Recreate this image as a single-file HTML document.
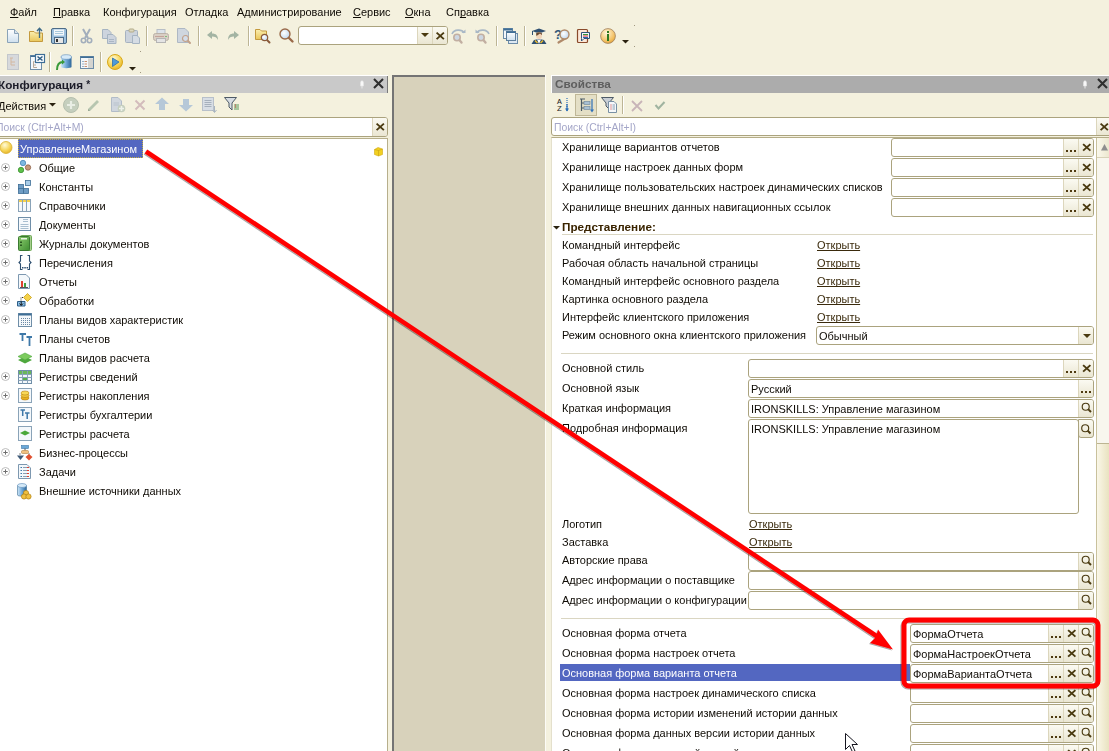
<!DOCTYPE html><html><head><meta charset="utf-8"><style>
*{margin:0;padding:0;box-sizing:border-box}
html,body{width:1109px;height:751px;overflow:hidden}
body{position:relative;background:#F4F1DE;font-family:"Liberation Sans",sans-serif;font-size:11px;color:#0E0A04}
.t{position:absolute;line-height:13px;white-space:pre;font-size:11.5px;transform:scaleX(.955);transform-origin:0 0}
.t.b{font-weight:bold;transform:scaleX(1.02)}
.u{text-decoration:underline;text-decoration-skip-ink:none}
u{text-decoration-skip-ink:none}
.fld{position:absolute;background:#fff;border:1px solid #ABA37E;border-radius:3px;overflow:hidden}
.btn{position:absolute;top:0;bottom:0;width:15px;border-left:1px solid #DCD6BC;background:linear-gradient(#FBFAF2,#EAE6D2)}
</style></head><body>
<div class="t " style="left:10px;top:6px;"><u>Ф</u>айл</div>
<div class="t " style="left:53px;top:6px;"><u>П</u>равка</div>
<div class="t " style="left:103px;top:6px;">Конфигурация</div>
<div class="t " style="left:185px;top:6px;">Отладка</div>
<div class="t " style="left:237px;top:6px;">Администрирование</div>
<div class="t " style="left:353px;top:6px;"><u>С</u>ервис</div>
<div class="t " style="left:405px;top:6px;"><u>О</u>кна</div>
<div class="t " style="left:446px;top:6px;">Сп<u>р</u>авка</div>
<div style="position:absolute;left:72px;top:26px;width:1px;height:20px;background:#BDB595"></div>
<div style="position:absolute;left:73px;top:26px;width:1px;height:20px;background:#FFFFFF"></div>
<div style="position:absolute;left:146px;top:26px;width:1px;height:20px;background:#BDB595"></div>
<div style="position:absolute;left:147px;top:26px;width:1px;height:20px;background:#FFFFFF"></div>
<div style="position:absolute;left:198px;top:26px;width:1px;height:20px;background:#BDB595"></div>
<div style="position:absolute;left:199px;top:26px;width:1px;height:20px;background:#FFFFFF"></div>
<div style="position:absolute;left:248px;top:26px;width:1px;height:20px;background:#BDB595"></div>
<div style="position:absolute;left:249px;top:26px;width:1px;height:20px;background:#FFFFFF"></div>
<div style="position:absolute;left:496px;top:26px;width:1px;height:20px;background:#BDB595"></div>
<div style="position:absolute;left:497px;top:26px;width:1px;height:20px;background:#FFFFFF"></div>
<div style="position:absolute;left:524px;top:26px;width:1px;height:20px;background:#BDB595"></div>
<div style="position:absolute;left:525px;top:26px;width:1px;height:20px;background:#FFFFFF"></div>
<div style="position:absolute;left:49px;top:52px;width:1px;height:20px;background:#BDB595"></div>
<div style="position:absolute;left:50px;top:52px;width:1px;height:20px;background:#FFFFFF"></div>
<div style="position:absolute;left:100px;top:52px;width:1px;height:20px;background:#BDB595"></div>
<div style="position:absolute;left:101px;top:52px;width:1px;height:20px;background:#FFFFFF"></div>
<div style="position:absolute;left:634px;top:25px;width:1px;height:1px;background:#A09880"></div>
<div style="position:absolute;left:634px;top:46px;width:1px;height:1px;background:#A09880"></div>
<div style="position:absolute;left:140px;top:51px;width:1px;height:1px;background:#A09880"></div>
<div style="position:absolute;left:140px;top:72px;width:1px;height:1px;background:#A09880"></div>
<div class="fld" style="left:298px;top:26px;width:150px;height:19px"><div class="btn" style="right:15px"></div><div class="btn" style="right:0"></div></div>
<div style="position:absolute;left:0px;top:75px;width:388px;height:1px;background:#FFFFFF"></div>
<div style="position:absolute;left:0px;top:76px;width:388px;height:17px;background:#C9C9C9"></div>
<div style="position:absolute;left:387px;top:76px;width:1px;height:17px;background:#7A7A7A"></div>
<div class="t b" style="left:-2px;top:78px;color:#1C1C28">Конфигурация <span style="font-size:10px;vertical-align:1px">*</span></div>
<div class="t " style="left:-2px;top:100px;">Действия</div>
<div class="fld" style="left:-3px;top:117px;width:391px;height:20px;border-radius:3px"><div class="btn" style="right:0;width:15px"></div></div>
<div class="t " style="left:-4px;top:121px;color:#A4A6C8;transform:scaleX(.905)">Поиск (Ctrl+Alt+M)</div>
<div style="position:absolute;left:0px;top:138px;width:388px;height:613px;background:#FFFFFF;border-top:1px solid #B7AF8C;border-right:1px solid #B7AF8C"></div>
<div style="position:absolute;left:0px;top:137px;width:388px;height:1px;background:#F2EFDA"></div>
<div style="position:absolute;left:18px;top:139px;width:125px;height:19px;background:#5367C1;outline:1px dotted #C8B040;outline-offset:-1px"></div>
<div class="t " style="left:20px;top:143px;color:#FFFFFF">УправлениеМагазином</div>
<div class="t " style="left:39px;top:162px;">Общие</div>
<div class="t " style="left:39px;top:181px;">Константы</div>
<div class="t " style="left:39px;top:200px;">Справочники</div>
<div class="t " style="left:39px;top:219px;">Документы</div>
<div class="t " style="left:39px;top:238px;">Журналы документов</div>
<div class="t " style="left:39px;top:257px;">Перечисления</div>
<div class="t " style="left:39px;top:276px;">Отчеты</div>
<div class="t " style="left:39px;top:295px;">Обработки</div>
<div class="t " style="left:39px;top:314px;">Планы видов характеристик</div>
<div class="t " style="left:39px;top:333px;">Планы счетов</div>
<div class="t " style="left:39px;top:352px;">Планы видов расчета</div>
<div class="t " style="left:39px;top:371px;">Регистры сведений</div>
<div class="t " style="left:39px;top:390px;">Регистры накопления</div>
<div class="t " style="left:39px;top:409px;">Регистры бухгалтерии</div>
<div class="t " style="left:39px;top:428px;">Регистры расчета</div>
<div class="t " style="left:39px;top:447px;">Бизнес-процессы</div>
<div class="t " style="left:39px;top:466px;">Задачи</div>
<div class="t " style="left:39px;top:485px;">Внешние источники данных</div>
<div style="position:absolute;left:392px;top:75px;width:154px;height:676px;background:#D8D2BB"></div>
<div style="position:absolute;left:392px;top:75px;width:2px;height:676px;background:#747474"></div>
<div style="position:absolute;left:392px;top:75px;width:153px;height:2px;background:#747474"></div>
<div style="position:absolute;left:545px;top:75px;width:1px;height:676px;background:#FCFBF6"></div>
<div style="position:absolute;left:551px;top:75px;width:558px;height:1px;background:#FFFFFF"></div>
<div style="position:absolute;left:551px;top:76px;width:1px;height:17px;background:#FFFFFF"></div>
<div style="position:absolute;left:552px;top:76px;width:557px;height:17px;background:#ACACAC"></div>
<div class="t b" style="left:555px;top:78px;color:#5E5E5E">Свойства</div>
<div style="position:absolute;left:575px;top:94px;width:22px;height:22px;background:#E4DFC6;border:1px solid #BFB797"></div>
<div style="position:absolute;left:622px;top:96px;width:1px;height:18px;background:#BDB595"></div>
<div style="position:absolute;left:623px;top:96px;width:1px;height:18px;background:#FFFFFF"></div>
<div class="fld" style="left:551px;top:117px;width:570px;height:19px"><div class="btn" style="right:8px;width:16px"></div></div>
<div class="t " style="left:554px;top:121px;color:#A4A6C8;transform:scaleX(.905)">Поиск (Ctrl+Alt+I)</div>
<div style="position:absolute;left:551px;top:137px;width:558px;height:614px;background:#FFFFFF;border-top:1px solid #B5AD88;border-left:1px solid #E4E0CC"></div>
<div style="position:absolute;left:560px;top:664px;width:350px;height:17px;background:#5367C1"></div>
<div class="t " style="left:562px;top:141px;color:#0E0A04">Хранилище вариантов отчетов</div>
<div class="t " style="left:562px;top:161px;color:#0E0A04">Хранилище настроек данных форм</div>
<div class="t " style="left:562px;top:181px;color:#0E0A04">Хранилище пользовательских настроек динамических списков</div>
<div class="t " style="left:562px;top:201px;color:#0E0A04">Хранилище внешних данных навигационных ссылок</div>
<div class="t " style="left:562px;top:239px;color:#0E0A04">Командный интерфейс</div>
<div class="t " style="left:562px;top:257px;color:#0E0A04">Рабочая область начальной страницы</div>
<div class="t " style="left:562px;top:275px;color:#0E0A04">Командный интерфейс основного раздела</div>
<div class="t " style="left:562px;top:293px;color:#0E0A04">Картинка основного раздела</div>
<div class="t " style="left:562px;top:311px;color:#0E0A04">Интерфейс клиентского приложения</div>
<div class="t " style="left:562px;top:329px;color:#0E0A04">Режим основного окна клиентского приложения</div>
<div class="t " style="left:562px;top:362px;color:#0E0A04">Основной стиль</div>
<div class="t " style="left:562px;top:382px;color:#0E0A04">Основной язык</div>
<div class="t " style="left:562px;top:402px;color:#0E0A04">Краткая информация</div>
<div class="t " style="left:562px;top:422px;color:#0E0A04">Подробная информация</div>
<div class="t " style="left:562px;top:518px;color:#0E0A04">Логотип</div>
<div class="t " style="left:562px;top:536px;color:#0E0A04">Заставка</div>
<div class="t " style="left:562px;top:554px;color:#0E0A04">Авторские права</div>
<div class="t " style="left:562px;top:574px;color:#0E0A04">Адрес информации о поставщике</div>
<div class="t " style="left:562px;top:594px;color:#0E0A04">Адрес информации о конфигурации</div>
<div class="t " style="left:562px;top:627px;color:#0E0A04">Основная форма отчета</div>
<div class="t " style="left:562px;top:647px;color:#0E0A04">Основная форма настроек отчета</div>
<div class="t " style="left:562px;top:667px;color:#FFFFFF">Основная форма варианта отчета</div>
<div class="t " style="left:562px;top:687px;color:#0E0A04">Основная форма настроек динамического списка</div>
<div class="t " style="left:562px;top:707px;color:#0E0A04">Основная форма истории изменений истории данных</div>
<div class="t " style="left:562px;top:727px;color:#0E0A04">Основная форма данных версии истории данных</div>
<div class="t " style="left:562px;top:747px;color:#0E0A04">Основная форма различий версий истории данных</div>
<div class="t b" style="left:562px;top:221px;color:#3A2400">Представление:</div>
<div style="position:absolute;left:562px;top:234px;width:531px;height:1px;background:#DAD6C2"></div>
<div style="position:absolute;left:561px;top:353px;width:532px;height:1px;background:#DAD6C2"></div>
<div style="position:absolute;left:561px;top:618px;width:532px;height:1px;background:#DAD6C2"></div>
<div class="fld" style="left:891px;top:138px;width:203px;height:19px"><div class="btn" style="right:0px"></div><div class="btn" style="right:15px"></div></div>
<div class="fld" style="left:891px;top:158px;width:203px;height:19px"><div class="btn" style="right:0px"></div><div class="btn" style="right:15px"></div></div>
<div class="fld" style="left:891px;top:178px;width:203px;height:19px"><div class="btn" style="right:0px"></div><div class="btn" style="right:15px"></div></div>
<div class="fld" style="left:891px;top:198px;width:203px;height:19px"><div class="btn" style="right:0px"></div><div class="btn" style="right:15px"></div></div>
<div class="t u" style="left:817px;top:239px;color:#3A2A0C">Открыть</div>
<div class="t u" style="left:817px;top:257px;color:#3A2A0C">Открыть</div>
<div class="t u" style="left:817px;top:275px;color:#3A2A0C">Открыть</div>
<div class="t u" style="left:817px;top:293px;color:#3A2A0C">Открыть</div>
<div class="t u" style="left:817px;top:311px;color:#3A2A0C">Открыть</div>
<div class="fld" style="left:816px;top:326px;width:278px;height:19px"><div class="btn" style="right:0px"></div></div>
<div class="t " style="left:819px;top:330px;">Обычный</div>
<div class="fld" style="left:748px;top:359px;width:346px;height:19px"><div class="btn" style="right:0px"></div><div class="btn" style="right:15px"></div></div>
<div class="fld" style="left:748px;top:379px;width:346px;height:19px"><div class="btn" style="right:0px"></div></div>
<div class="t " style="left:751px;top:383px;">Русский</div>
<div class="fld" style="left:748px;top:399px;width:346px;height:19px"><div class="btn" style="right:0px"></div></div>
<div class="t " style="left:751px;top:403px;">IRONSKILLS: Управление магазином</div>
<div class="fld" style="left:748px;top:419px;width:331px;height:95px"></div>
<div class="fld" style="left:1078px;top:419px;width:16px;height:19px;border-radius:0 3px 3px 3px;background:linear-gradient(#FBFAF2,#EAE6D2)"></div>
<div class="t " style="left:751px;top:423px;">IRONSKILLS: Управление магазином</div>
<div class="t u" style="left:749px;top:518px;color:#3A2A0C">Открыть</div>
<div class="t u" style="left:749px;top:536px;color:#3A2A0C">Открыть</div>
<div class="fld" style="left:748px;top:552px;width:346px;height:19px"><div class="btn" style="right:0px"></div></div>
<div class="fld" style="left:748px;top:571px;width:346px;height:19px"><div class="btn" style="right:0px"></div></div>
<div class="fld" style="left:748px;top:591px;width:346px;height:19px"><div class="btn" style="right:0px"></div></div>
<div class="fld" style="left:910px;top:624px;width:184px;height:19px"><div class="btn" style="right:0px"></div><div class="btn" style="right:15px"></div><div class="btn" style="right:30px"></div></div>
<div class="t " style="left:913px;top:628px;">ФормаОтчета</div>
<div class="fld" style="left:910px;top:644px;width:184px;height:19px"><div class="btn" style="right:0px"></div><div class="btn" style="right:15px"></div><div class="btn" style="right:30px"></div></div>
<div class="t " style="left:913px;top:648px;">ФормаНастроекОтчета</div>
<div class="fld" style="left:910px;top:664px;width:184px;height:19px"><div class="btn" style="right:0px"></div><div class="btn" style="right:15px"></div><div class="btn" style="right:30px"></div></div>
<div class="t " style="left:913px;top:668px;">ФормаВариантаОтчета</div>
<div class="fld" style="left:910px;top:684px;width:184px;height:19px"><div class="btn" style="right:0px"></div><div class="btn" style="right:15px"></div><div class="btn" style="right:30px"></div></div>
<div class="fld" style="left:910px;top:704px;width:184px;height:19px"><div class="btn" style="right:0px"></div><div class="btn" style="right:15px"></div><div class="btn" style="right:30px"></div></div>
<div class="fld" style="left:910px;top:724px;width:184px;height:19px"><div class="btn" style="right:0px"></div><div class="btn" style="right:15px"></div><div class="btn" style="right:30px"></div></div>
<div class="fld" style="left:910px;top:744px;width:184px;height:19px"><div class="btn" style="right:0px"></div><div class="btn" style="right:15px"></div><div class="btn" style="right:30px"></div></div>
<div style="position:absolute;left:1096px;top:138px;width:13px;height:613px;background:#F8F6EE;border-left:1px solid #C9C19C"></div>
<div style="position:absolute;left:1097px;top:138px;width:12px;height:20px;background:linear-gradient(90deg,#FAF8EC,#ECE7CF);border-bottom:1px solid #D8D2B8"></div>
<div style="position:absolute;left:1097px;top:443px;width:12px;height:308px;background:linear-gradient(90deg,#FAF7E8,#E9E2C0);border-top:1px solid #BDB592"></div>
<svg style="position:absolute;left:0;top:0" width="1109" height="751" viewBox="0 0 1109 751"><defs><linearGradient id="gDoc" x1="0" y1="0" x2="0" y2="1"><stop offset="0" stop-color="#FFFFFF"/><stop offset="1" stop-color="#CFE0EE"/></linearGradient><linearGradient id="gFol" x1="0" y1="0" x2="0" y2="1"><stop offset="0" stop-color="#FBEFB0"/><stop offset="1" stop-color="#E9C65A"/></linearGradient><linearGradient id="gGrn" x1="0" y1="0" x2="1" y2="1"><stop offset="0" stop-color="#8CCB6E"/><stop offset="1" stop-color="#3F8F32"/></linearGradient><radialGradient id="gYel" cx="0.4" cy="0.3" r="0.8"><stop offset="0" stop-color="#FFFBD8"/><stop offset="0.6" stop-color="#F5D250"/><stop offset="1" stop-color="#E0A820"/></radialGradient><linearGradient id="gBlu" x1="0" y1="0" x2="1" y2="0"><stop offset="0" stop-color="#CFE6F7"/><stop offset="0.5" stop-color="#6FA8D6"/><stop offset="1" stop-color="#2D6699"/></linearGradient><radialGradient id="gGlass" cx="0.4" cy="0.4" r="0.7"><stop offset="0" stop-color="#FFFFFF"/><stop offset="1" stop-color="#B9D2EC"/></radialGradient><radialGradient id="gOrg" cx="0.4" cy="0.3" r="0.8"><stop offset="0" stop-color="#FFF6DA"/><stop offset="0.7" stop-color="#F2BE5E"/><stop offset="1" stop-color="#D89A30"/></radialGradient></defs><g transform="translate(5,28)"><path d="M2.5 1.5H9.5L13.5 5.5V14.5H2.5Z" fill="url(#gDoc)" stroke="#8AA3B8"/><path d="M9.5 1.5V5.5H13.5" fill="#D6E2EC" stroke="#8AA3B8"/></g><g transform="translate(28,27)"><path d="M1.5 4.5H6L7.5 6H14.5V14.5H1.5Z" fill="url(#gFol)" stroke="#C49A3E"/><path d="M11.5 11V1.5M9 4L11.5 1.2L14 4" fill="none" stroke="#3D6A86" stroke-width="1.3"/></g><g transform="translate(51,28)"><rect x="0.5" y="0.5" width="15" height="15" rx="1.5" fill="#9CC0DE" stroke="#4D6C88"/><rect x="3" y="1.5" width="10" height="6" fill="#F3F7FA"/><path d="M4 3.5H12M4 5.5H12" stroke="#A8C8DC"/><rect x="3.5" y="9.5" width="9" height="6" fill="#E6E6E6" stroke="#4D6C88"/><rect x="5" y="11" width="2" height="3" fill="#333"/></g><g transform="translate(79,28)"><path d="M4 1L9 10M11 1L6 10" stroke="#A2AEBC" stroke-width="2"/><circle cx="4.5" cy="12.5" r="2.2" fill="none" stroke="#A2AEBC" stroke-width="1.6"/><circle cx="10.5" cy="12.5" r="2.2" fill="none" stroke="#A2AEBC" stroke-width="1.6"/></g><g transform="translate(101,28)"><path d="M1.5 1.5H7L10 4.5V10.5H1.5Z" fill="#CDD4DE" stroke="#A6B4C2"/><path d="M6.5 6.5H12L15 9.5V15.5H6.5Z" fill="#CDD4DE" stroke="#A6B4C2"/><path d="M8 11.5H13M8 13.5H13" stroke="#AAB6C4"/></g><g transform="translate(124,28)"><rect x="1.5" y="2.5" width="12" height="12" rx="1" fill="#CCD3DC" stroke="#A6B2C0"/><rect x="5" y="1" width="5" height="3" rx="1" fill="#DCD8C0" stroke="#B3AB88"/><path d="M8.5 7.5H13L15.5 10V15.5H8.5Z" fill="#D5DCE4" stroke="#A6B4C2"/></g><g transform="translate(153,28)"><rect x="4" y="1.5" width="8" height="5" fill="#DCE3EA" stroke="#B7BEC6"/><rect x="0.5" y="5.5" width="15" height="7" rx="2" fill="#D9CFC4" stroke="#BBB2A8"/><rect x="3.5" y="10.5" width="9" height="4" fill="#E4E4E4" stroke="#B5B5B5"/><path d="M2 8.5H11" stroke="#C3A39A"/><rect x="12" y="8" width="2" height="1" fill="#7BC07B"/></g><g transform="translate(176,28)"><path d="M1.5 0.5H9L12.5 4V14.5H1.5Z" fill="#CFD6DF" stroke="#AEB8C4"/><path d="M11.3 12.3 L14 15" stroke="#C2A18A" stroke-width="2" stroke-linecap="round"/><circle cx="9.5" cy="10.5" r="3" fill="#D3DDEA" stroke="#C2A18A" stroke-width="1.2"/></g><g transform="translate(206,30)"><path d="M1 5L6 1V3.5C10 3.5 12 5.5 12 10C11 7.5 9 6.5 6 6.5V9Z" fill="#A3B4A3"/></g><g transform="translate(227,30)"><path d="M12 5L7 1V3.5C3 3.5 1 5.5 1 10C2 7.5 4 6.5 7 6.5V9Z" fill="#A3B4A3"/></g><g transform="translate(255,28)"><path d="M0.5 1.5H5L6.5 3H11.5V11.5H0.5Z" fill="url(#gFol)" stroke="#C49A3E"/><path d="M11.4 11.4 L14.5 14.5" stroke="#8A5A3A" stroke-width="2" stroke-linecap="round"/><circle cx="9.5" cy="9.5" r="3.2" fill="url(#gGlass)" stroke="#8A5A3A" stroke-width="1.2"/></g><g transform="translate(279,28)"><path d="M9.0 9.0 L13.5 13.5" stroke="#9A6A4A" stroke-width="2.4" stroke-linecap="round"/><circle cx="6" cy="6" r="5" fill="url(#gGlass)" stroke="#9A6A4A" stroke-width="1.4"/></g><g transform="translate(451,28)"><path d="M1 6C3 1 11 1 13 5" fill="none" stroke="#A9B8C6" stroke-width="1.6"/><path d="M10.5 5H14.5V1.5Z" fill="#A9B8C6"/><path d="M7.9 11.4 L10.5 14.5" stroke="#C2AFA2" stroke-width="2.4" stroke-linecap="round"/><circle cx="6" cy="9.5" r="3.2" fill="#CDD7E2" stroke="#C2AFA2" stroke-width="1.6"/></g><g transform="translate(474,28)"><path d="M15 6C13 1 5 1 3 5" fill="none" stroke="#A9B8C6" stroke-width="1.6"/><path d="M5.5 5H1.5V1.5Z" fill="#A9B8C6"/><path d="M8.9 11.4 L11.5 14.5" stroke="#C2AFA2" stroke-width="2.4" stroke-linecap="round"/><circle cx="7" cy="9.5" r="3.2" fill="#CDD7E2" stroke="#C2AFA2" stroke-width="1.6"/></g><g transform="translate(503,28)"><rect x="0.5" y="0.5" width="9" height="10" fill="#F3F7FB" stroke="#6C8CA8"/><rect x="0.5" y="0.5" width="9" height="2" fill="#3E6E96"/><rect x="5.5" y="5.5" width="9" height="10" fill="#DDE8F2" stroke="#6C8CA8"/><rect x="3.5" y="3.5" width="9" height="9" fill="url(#gDoc)" stroke="#5E7F9C"/><rect x="3.5" y="3.5" width="9" height="1.5" fill="#3E6E96"/></g><g transform="translate(531,28)"><path d="M1 3L8 0.5L15 3L8 5.5Z" fill="#2E4F70"/><path d="M1.5 3V7" stroke="#2E4F70"/><ellipse cx="8" cy="7.5" rx="3" ry="3.5" fill="#F2D4B8"/><path d="M5 5.5Q8 3 11 5.5V7L9 5.5L5.5 8Z" fill="#6B4A30"/><path d="M0.5 16L3 12L8 11L13 12L15.5 16Z" fill="#2E4F70"/><path d="M6 11.5L8 16L10 11.5" fill="#FFFFFF"/><path d="M4 12.5L6.5 15M12 12.5L9.5 15" stroke="#E8B830" stroke-width="1.5"/></g><g transform="translate(554,28)"><text x="0" y="11" font-family="Liberation Sans" font-weight="bold" font-size="13" fill="#2F5678">?</text><path d="M13.2 9.2 L4.5 14.5" stroke="#B08A6A" stroke-width="2.2" stroke-linecap="round"/><circle cx="10.5" cy="6.5" r="4.5" fill="url(#gGlass)" stroke="#B08A6A" stroke-width="1.4"/></g><g transform="translate(576,28)"><rect x="1.5" y="1.5" width="10" height="13" rx="1" fill="#FCE8D8" stroke="#8A4A2A" stroke-width="1.2"/><path d="M5.5 4.5H13.5V10.5H8L5.5 13V10.5Z" fill="#F3F6FA" stroke="#2F5678"/><path d="M7 6.5H12" stroke="#3A9A3A"/><path d="M7 8H12" stroke="#D03030"/><path d="M7 9.5H12" stroke="#3060B0"/></g><g transform="translate(600,28)"><circle cx="8" cy="8" r="7.4" fill="url(#gOrg)" stroke="#A08060" stroke-width="0.8"/><rect x="7" y="3" width="2" height="2" fill="#2E7A20"/><rect x="7" y="6" width="2" height="7" fill="#2E7A20"/></g><g transform="translate(622,40)"><path d="M0 0H7L3.5 3.5Z" fill="#2A2210"/></g><g transform="translate(421,33)"><path d="M0 0H8L4 4Z" fill="#4A3A10"/></g><g transform="translate(436,32)"><path d="M0.6 0.6L7.9 7.1M7.9 0.6L0.6 7.1" stroke="#4A3A10" stroke-width="1.9"/></g><g transform="translate(6,54)"><rect x="1.5" y="0.5" width="11" height="15" fill="#D7D9DC" stroke="#C3C7CC"/><path d="M4 4H7M5 4V11H9M5 8H9" stroke="#D4B8A0" fill="none"/></g><g transform="translate(29,54)"><rect x="1.5" y="1.5" width="11" height="14" fill="#F5F8FB" stroke="#6F8EA8"/><rect x="1.5" y="1.5" width="11" height="1.5" fill="#3E6E96"/><path d="M4.5 7.5H5.5M4.5 7.5V13.5H8M4.5 11H7" stroke="#B8A898" fill="none"/><rect x="6.5" y="0.5" width="9" height="8" fill="#FFFFFF" stroke="#3E6E96" stroke-width="1.2"/><path d="M8.5 2.5L13.5 6.5M13.5 2.5L8.5 6.5" stroke="#2E5E86" stroke-width="1.6"/></g><g transform="translate(56,54)"><path d="M5 3V13C5 14.5 15.5 14.5 15.5 13V3Z" fill="url(#gBlu)"/><ellipse cx="10.25" cy="3" rx="5.25" ry="2.3" fill="#D6EAF8" stroke="#5A8AB8" stroke-width="0.6"/><path d="M1 16C1 10 3 8 7 8" fill="none" stroke="#3A9A3A" stroke-width="2"/><path d="M6 5.5L9 8L6 10.5Z" fill="#3A9A3A"/></g><g transform="translate(80,56)"><rect x="0.5" y="0.5" width="13" height="12" fill="#F4F7FA" stroke="#6C8CA8"/><rect x="0.5" y="0.5" width="13" height="1.5" fill="#3E6E96"/><rect x="8" y="2.5" width="5" height="9.5" fill="#D4D4D0"/><path d="M2.5 5.5H3.5M2.5 8H3.5M2.5 10.5H3.5" stroke="#3E6E96"/><path d="M4.5 5.5H7M4.5 8H7M4.5 10.5H7" stroke="#C89070"/></g><g transform="translate(107,54)"><circle cx="8" cy="8" r="7.5" fill="url(#gYel)" stroke="#D9A81A" stroke-width="1"/><path d="M5.5 4V12.5L12 8Z" fill="#4D9AD8" stroke="#2F6FA8" stroke-width="0.8"/></g><g transform="translate(129,67)"><path d="M0 0H7L3.5 3.5Z" fill="#2A2210"/></g><g transform="translate(359,79.5)"><path d="M1.5 3.5C1.5 0.5 4.5 0.5 4.5 3.5V6.5H1.5Z" fill="#F8F8F8" stroke="#E4E4E4" stroke-width="0.6"/><path d="M3 6.5V9" stroke="#E8E8E8"/></g><g transform="translate(373,78)"><path d="M1 1L10 10M10 1L1 10" stroke="#2E2E2E" stroke-width="2.1"/></g><g transform="translate(49,103)"><path d="M0 0H7L3.5 3.5Z" fill="#2A2210"/></g><g transform="translate(63,97)"><circle cx="8" cy="8" r="7.5" fill="#C5CFBE" stroke="#B5BFAE"/><path d="M8 4V12M4 8H12" stroke="#E9EEE5" stroke-width="2.2"/></g><g transform="translate(86,97)"><path d="M2 12L11 3L13 5L4 14H2Z" fill="#B7C6B0"/><path d="M2 12L4 14H2Z" fill="#9AA894"/></g><g transform="translate(110,97)"><path d="M1.5 0.5H8L11.5 4V14.5H1.5Z" fill="#D0D6DE" stroke="#B2BCC8"/><path d="M3.5 6H9M3.5 8H9" stroke="#B8C2CC"/><circle cx="11.5" cy="11.5" r="3.8" fill="#C5CFBE"/><path d="M11.5 9V14M9 11.5H14" stroke="#EEF2EA" stroke-width="1.6"/></g><g transform="translate(134,99)"><path d="M1.5 1.5L10.5 10.5M10.5 1.5L1.5 10.5" stroke="#D3BCBC" stroke-width="2"/></g><g transform="translate(155,97)"><path d="M7 0.5L14 7H10V13H4V7H0Z" fill="#B6C8D8"/></g><g transform="translate(179,98)"><path d="M7 13.5L14 7H10V1H4V7H0Z" fill="#B6C8D8"/></g><g transform="translate(202,97)"><rect x="0.5" y="0.5" width="11" height="13" fill="#D8DEE5" stroke="#B8C0CA"/><path d="M2.5 3.5H9.5M2.5 5.5H9.5M2.5 7.5H9.5M2.5 9.5H9.5" stroke="#A6B0BC"/><path d="M12.5 9V15M10.5 13L12.5 15.5L14.5 13" stroke="#A8B4C0" fill="none"/></g><g transform="translate(224,96)"><path d="M0.5 1.5H12.5L8 7V14L5 11V7Z" fill="#D6DCE2" stroke="#4E5A66"/><path d="M10 9H15M10 11H15M10 13H15" stroke="#5A9A5A"/><path d="M11 9H12M11 11H12" stroke="#D04040"/></g><g transform="translate(376,123)"><path d="M0.6 0.6L7.9 7.1M7.9 0.6L0.6 7.1" stroke="#4A3A10" stroke-width="1.9"/></g><g transform="translate(1,139.5)"><circle cx="5" cy="8" r="6" fill="url(#gYel)" stroke="#D8B030" stroke-width="0.8"/></g><g transform="translate(18,160)"><circle cx="5" cy="3" r="2.7" fill="#7DB8E0" stroke="#4A88B8" stroke-width="0.8"/><circle cx="3" cy="10" r="2.7" fill="#5EC04A" stroke="#3A9030" stroke-width="0.8"/><circle cx="10" cy="7.5" r="2.7" fill="#C89878" stroke="#8A6048" stroke-width="0.8"/></g><g transform="translate(1,163)"><circle cx="4.5" cy="4.5" r="4" fill="#fff" stroke="#BDBDBD" stroke-width="1"/><path d="M2.3 4.5H6.7M4.5 2.3V6.7" stroke="#6E6E6E" stroke-width="1"/></g><g transform="translate(18,180)"><rect x="0.5" y="4.5" width="5" height="5" fill="#6E9CC4" stroke="#3E6E96" stroke-width="0.8"/><rect x="7.5" y="0.5" width="5" height="5" fill="#A8CCE8" stroke="#3E6E96" stroke-width="0.8"/><rect x="0.5" y="8.5" width="5" height="5" fill="#6E9CC4" stroke="#3E6E96" stroke-width="0.8"/><rect x="5.5" y="8.5" width="5" height="5" fill="#6E9CC4" stroke="#3E6E96" stroke-width="0.8"/></g><g transform="translate(1,182)"><circle cx="4.5" cy="4.5" r="4" fill="#fff" stroke="#BDBDBD" stroke-width="1"/><path d="M2.3 4.5H6.7M4.5 2.3V6.7" stroke="#6E6E6E" stroke-width="1"/></g><g transform="translate(18,199)"><rect x="0.5" y="0.5" width="12" height="12" fill="#F4F8FB" stroke="#8AA3B8"/><rect x="1" y="1" width="11" height="2" fill="#F5D24A"/><path d="M4.5 1V12.5M8.5 1V12.5" stroke="#8AA3B8"/></g><g transform="translate(1,201)"><circle cx="4.5" cy="4.5" r="4" fill="#fff" stroke="#BDBDBD" stroke-width="1"/><path d="M2.3 4.5H6.7M4.5 2.3V6.7" stroke="#6E6E6E" stroke-width="1"/></g><g transform="translate(18,217)"><rect x="0.5" y="0.5" width="12" height="13" fill="#F6F9FC" stroke="#6F8EA8"/><path d="M5 2.5H10M5 4.5H10M2.5 7.5H10.5M2.5 9.5H10.5M2.5 11.5H10.5" stroke="#A9BED0"/></g><g transform="translate(1,220)"><circle cx="4.5" cy="4.5" r="4" fill="#fff" stroke="#BDBDBD" stroke-width="1"/><path d="M2.3 4.5H6.7M4.5 2.3V6.7" stroke="#6E6E6E" stroke-width="1"/></g><g transform="translate(18,235)"><rect x="2.5" y="0.5" width="11" height="15" rx="1" fill="#A8D090" stroke="#6EA858"/><rect x="0.5" y="1.5" width="11" height="14" rx="1" fill="url(#gGrn)" stroke="#3A7A30"/><rect x="3" y="3" width="6" height="1.5" fill="#E8F4E0"/><rect x="2" y="6.5" width="2" height="1.5" fill="#2A5A20"/><rect x="2" y="9.5" width="2" height="1.5" fill="#2A5A20"/></g><g transform="translate(1,239)"><circle cx="4.5" cy="4.5" r="4" fill="#fff" stroke="#BDBDBD" stroke-width="1"/><path d="M2.3 4.5H6.7M4.5 2.3V6.7" stroke="#6E6E6E" stroke-width="1"/></g><g transform="translate(18,255)"><path d="M4.5 0.5H2.5V6L1 7.5L2.5 9V14.5H4.5M9.5 0.5H11.5V6L13 7.5L11.5 9V14.5H9.5" fill="none" stroke="#2E4F70" stroke-width="1.1"/><rect x="4" y="12" width="1.5" height="1.5" fill="#2E4F70"/><rect x="6.3" y="12" width="1.5" height="1.5" fill="#2E4F70"/><rect x="8.6" y="12" width="1.5" height="1.5" fill="#2E4F70"/></g><g transform="translate(1,258)"><circle cx="4.5" cy="4.5" r="4" fill="#fff" stroke="#BDBDBD" stroke-width="1"/><path d="M2.3 4.5H6.7M4.5 2.3V6.7" stroke="#6E6E6E" stroke-width="1"/></g><g transform="translate(18,274)"><path d="M0.5 0.5H8L11.5 4V14.5H0.5Z" fill="#F4F8FB" stroke="#7D98B0"/><rect x="3" y="7" width="2" height="6" fill="#E04030"/><rect x="6" y="9" width="2" height="4" fill="#40A040"/><path d="M2 13.5H10" stroke="#555"/></g><g transform="translate(1,277)"><circle cx="4.5" cy="4.5" r="4" fill="#fff" stroke="#BDBDBD" stroke-width="1"/><path d="M2.3 4.5H6.7M4.5 2.3V6.7" stroke="#6E6E6E" stroke-width="1"/></g><g transform="translate(17,293)"><path d="M10.5 0.5L14.5 4.5L10.5 8.5L6.5 4.5Z" fill="#F5D24A" stroke="#C8A020" stroke-width="0.8"/><path d="M6 4.5H4V9" stroke="#333" stroke-dasharray="1 1" fill="none"/><path d="M0.5 8.5H8V13H0.5Z" fill="#8CC0E8" stroke="#2E5E86"/><path d="M4.2 8.5V12M2.5 10.5L4.2 12.5L6 10.5" stroke="#111" fill="none"/></g><g transform="translate(1,296)"><circle cx="4.5" cy="4.5" r="4" fill="#fff" stroke="#BDBDBD" stroke-width="1"/><path d="M2.3 4.5H6.7M4.5 2.3V6.7" stroke="#6E6E6E" stroke-width="1"/></g><g transform="translate(18,313)"><rect x="0.5" y="0.5" width="13" height="13" fill="#F4F8FB" stroke="#6F8EA8"/><rect x="0.5" y="0.5" width="13" height="2" fill="#3E6E96"/><path d="M3.5 5V12M5.5 5V12M7.5 5V12M9.5 5V12M11.5 5V12" stroke="#6A88A4" stroke-dasharray="1 1"/></g><g transform="translate(1,315)"><circle cx="4.5" cy="4.5" r="4" fill="#fff" stroke="#BDBDBD" stroke-width="1"/><path d="M2.3 4.5H6.7M4.5 2.3V6.7" stroke="#6E6E6E" stroke-width="1"/></g><g transform="translate(19,333)"><path d="M0.5 1H7M3.5 1V8M7.5 4H13M10.5 4V13" stroke="#3E78A8" stroke-width="1.8" fill="none"/></g><g transform="translate(17,352)"><path d="M1 8L8 4.5L15 8L8 11.5Z" fill="#4FA83E"/><path d="M1 4.5L8 1L15 4.5L8 8Z" fill="#7CCB5E" stroke="#4FA83E" stroke-width="0.6"/></g><g transform="translate(18,370)"><rect x="0.5" y="0.5" width="13" height="13" fill="#F4F8FB" stroke="#6F8EA8"/><rect x="1" y="1" width="12" height="3" fill="#6AB85A"/><path d="M0.5 4.5H13.5M0.5 7.5H13.5M0.5 10.5H13.5M4.5 1V13.5M9.5 1V13.5" stroke="#8AA3B8"/><rect x="5" y="8" width="4" height="2" fill="#5AB04A"/></g><g transform="translate(1,372)"><circle cx="4.5" cy="4.5" r="4" fill="#fff" stroke="#BDBDBD" stroke-width="1"/><path d="M2.3 4.5H6.7M4.5 2.3V6.7" stroke="#6E6E6E" stroke-width="1"/></g><g transform="translate(18,388)"><rect x="0.5" y="0.5" width="13" height="14" fill="#F4F8FB" stroke="#8AA3B8"/><ellipse cx="7" cy="10" rx="4" ry="2" fill="#E8B020" stroke="#B88010" stroke-width="0.6"/><ellipse cx="7" cy="7.5" rx="4" ry="2" fill="#F0C840" stroke="#B88010" stroke-width="0.6"/><ellipse cx="7" cy="5" rx="4" ry="2" fill="#F8D858" stroke="#B88010" stroke-width="0.6"/></g><g transform="translate(1,391)"><circle cx="4.5" cy="4.5" r="4" fill="#fff" stroke="#BDBDBD" stroke-width="1"/><path d="M2.3 4.5H6.7M4.5 2.3V6.7" stroke="#6E6E6E" stroke-width="1"/></g><g transform="translate(18,407)"><rect x="0.5" y="0.5" width="13" height="14" fill="#F4F8FB" stroke="#8AA3B8"/><path d="M2.5 3H7M4.7 3V9M7 6H11.5M9.2 6V12" stroke="#3E78A8" stroke-width="1.5" fill="none"/></g><g transform="translate(18,426)"><rect x="0.5" y="0.5" width="13" height="14" fill="#F4F8FB" stroke="#8AA3B8"/><path d="M2 7L7 4.5L12 7L7 9.5Z" fill="#4AA83A"/></g><g transform="translate(17,445)"><rect x="4.5" y="0.5" width="7" height="3" fill="#6AA8D8" stroke="#3E78A8" stroke-width="0.6"/><path d="M8 3.5V5.5" stroke="#555"/><rect x="4.5" y="5.5" width="7" height="3" rx="1" fill="#F0C080" stroke="#B08040" stroke-width="0.6"/><path d="M3 8V10M12 8V10" stroke="#888"/><path d="M0 10.5H7L3.5 15Z" fill="#3E5A78"/><path d="M12 9L15.5 12L12 15.5L8.5 12Z" fill="#E05030"/></g><g transform="translate(1,448)"><circle cx="4.5" cy="4.5" r="4" fill="#fff" stroke="#BDBDBD" stroke-width="1"/><path d="M2.3 4.5H6.7M4.5 2.3V6.7" stroke="#6E6E6E" stroke-width="1"/></g><g transform="translate(18,464)"><path d="M0.5 0.5H9L12.5 4V14.5H0.5Z" fill="#F4F8FB" stroke="#7D98B0"/><path d="M2.5 3.5H4M2.5 6.5H4M2.5 9.5H4M2.5 12.5H4" stroke="#3E78A8"/><path d="M5 3.5H9M5 6.5H9M5 9.5H9M5 12.5H9" stroke="#8AA0B4"/><path d="M9 3.5H11M9 6.5H11M9 9.5H11M9 12.5H11" stroke="#E04030"/></g><g transform="translate(1,467)"><circle cx="4.5" cy="4.5" r="4" fill="#fff" stroke="#BDBDBD" stroke-width="1"/><path d="M2.3 4.5H6.7M4.5 2.3V6.7" stroke="#6E6E6E" stroke-width="1"/></g><g transform="translate(17,483)"><path d="M0.5 2.5V12C0.5 13.5 9.5 13.5 9.5 12V2.5Z" fill="url(#gBlu)" stroke="#3E6E96" stroke-width="0.6"/><ellipse cx="5" cy="2.5" rx="4.5" ry="2" fill="#D6EAF8" stroke="#5A8AB8" stroke-width="0.6"/><circle cx="9" cy="10" r="2.6" fill="#F0C040" stroke="#B08010" stroke-width="0.7"/><circle cx="7" cy="13.5" r="2.6" fill="#F0C040" stroke="#B08010" stroke-width="0.7"/><circle cx="11.5" cy="13.5" r="2.6" fill="#F0C040" stroke="#B08010" stroke-width="0.7"/></g><g transform="translate(374,147)"><path d="M0.5 2.5L4 0.5L8.5 2L8.5 7.5L4.5 9L0.5 7.5Z" fill="#F2D020" stroke="#D0A810" stroke-width="0.6"/><path d="M4.5 3.5V9M0.5 2.5L4.5 3.5L8.5 2" stroke="#C8A010" stroke-width="0.6" fill="none"/></g><g transform="translate(1082,79.5)"><path d="M1.5 3.5C1.5 0.5 4.5 0.5 4.5 3.5V6.5H1.5Z" fill="#F8F8F8" stroke="#E4E4E4" stroke-width="0.6"/><path d="M3 6.5V9" stroke="#E8E8E8"/></g><g transform="translate(1097,78)"><path d="M1 1L10 10M10 1L1 10" stroke="#2E2E2E" stroke-width="2.1"/></g><g transform="translate(557,97)"><text x="0" y="6.5" font-family="Liberation Mono" font-size="8" fill="#222">A</text><text x="0" y="14" font-family="Liberation Mono" font-size="8" fill="#222">Z</text><path d="M10 1V13.5" stroke="#2E70B8" stroke-width="1.2" stroke-dasharray="1 1"/><path d="M10 7V14" stroke="#2E70B8" stroke-width="1.2"/><path d="M8 11.5L10 14.5L12 11.5Z" fill="#2E70B8"/></g><g transform="translate(579,98)"><path d="M1 1H6M2.5 1V13M2.5 5H6M2.5 10H6" stroke="#4A5A66" stroke-width="1.2" fill="none"/><rect x="5" y="3.5" width="6" height="3" fill="#A8C0D4" stroke="#6A8298" stroke-width="0.6"/><rect x="5" y="8.5" width="6" height="3" fill="#A8C0D4" stroke="#6A8298" stroke-width="0.6"/><path d="M13 1V13" stroke="#2E70B8" stroke-width="1.2"/><path d="M11 11.5L13 14.5L15 11.5Z" fill="#2E70B8"/></g><g transform="translate(601,97)"><path d="M0.5 0.5H12.5L8 6V12L5 9V6Z" fill="#C9CFD6" stroke="#4E5A66"/><path d="M7.5 4.5H13L15.5 7V15.5H7.5Z" fill="#F6F8FA" stroke="#7890A4"/><path d="M9.5 8H10.5M9.5 10H10.5M9.5 12H10.5" stroke="#D03030"/><path d="M11.5 8H14M11.5 10H14M11.5 12H14" stroke="#8AA0B4"/></g><g transform="translate(631,100)"><path d="M1 1L11 11M11 1L1 11" stroke="#C8B4B8" stroke-width="1.8"/></g><g transform="translate(655,101)"><path d="M0.5 4L3.5 7.5L9.5 1" fill="none" stroke="#A0B4A0" stroke-width="2"/></g><g transform="translate(1100,123)"><path d="M0.6 0.6L7.9 7.1M7.9 0.6L0.6 7.1" stroke="#4A3A10" stroke-width="1.9"/></g><g transform="translate(553,226)"><path d="M0 0H7L3.5 3.5Z" fill="#2A2210"/></g><g transform="translate(1066,150)"><rect x="0" y="0" width="2" height="2" fill="#4F3A10"/><rect x="4" y="0" width="2" height="2" fill="#4F3A10"/><rect x="8" y="0" width="2" height="2" fill="#4F3A10"/></g><g transform="translate(1082.5,143.5)"><path d="M0.6 0.6L7.9 7.1M7.9 0.6L0.6 7.1" stroke="#4A3A10" stroke-width="1.9"/></g><g transform="translate(1066,170)"><rect x="0" y="0" width="2" height="2" fill="#4F3A10"/><rect x="4" y="0" width="2" height="2" fill="#4F3A10"/><rect x="8" y="0" width="2" height="2" fill="#4F3A10"/></g><g transform="translate(1082.5,163.5)"><path d="M0.6 0.6L7.9 7.1M7.9 0.6L0.6 7.1" stroke="#4A3A10" stroke-width="1.9"/></g><g transform="translate(1066,190)"><rect x="0" y="0" width="2" height="2" fill="#4F3A10"/><rect x="4" y="0" width="2" height="2" fill="#4F3A10"/><rect x="8" y="0" width="2" height="2" fill="#4F3A10"/></g><g transform="translate(1082.5,183.5)"><path d="M0.6 0.6L7.9 7.1M7.9 0.6L0.6 7.1" stroke="#4A3A10" stroke-width="1.9"/></g><g transform="translate(1066,210)"><rect x="0" y="0" width="2" height="2" fill="#4F3A10"/><rect x="4" y="0" width="2" height="2" fill="#4F3A10"/><rect x="8" y="0" width="2" height="2" fill="#4F3A10"/></g><g transform="translate(1082.5,203.5)"><path d="M0.6 0.6L7.9 7.1M7.9 0.6L0.6 7.1" stroke="#4A3A10" stroke-width="1.9"/></g><g transform="translate(1083,334)"><path d="M0 0H8L4 4Z" fill="#4A3A10"/></g><g transform="translate(1066,371)"><rect x="0" y="0" width="2" height="2" fill="#4F3A10"/><rect x="4" y="0" width="2" height="2" fill="#4F3A10"/><rect x="8" y="0" width="2" height="2" fill="#4F3A10"/></g><g transform="translate(1082.5,364.5)"><path d="M0.6 0.6L7.9 7.1M7.9 0.6L0.6 7.1" stroke="#4A3A10" stroke-width="1.9"/></g><g transform="translate(1081,391)"><rect x="0" y="0" width="2" height="2" fill="#4F3A10"/><rect x="4" y="0" width="2" height="2" fill="#4F3A10"/><rect x="8" y="0" width="2" height="2" fill="#4F3A10"/></g><g transform="translate(1081.5,402.5)"><circle cx="4.2" cy="4.2" r="3.5" fill="none" stroke="#4A3A10" stroke-width="1.15"/><path d="M6.6 6.6L9.5 9.5" stroke="#4A3A10" stroke-width="2"/></g><g transform="translate(1081,424)"><circle cx="4.2" cy="4.2" r="3.5" fill="none" stroke="#4A3A10" stroke-width="1.15"/><path d="M6.6 6.6L9.5 9.5" stroke="#4A3A10" stroke-width="2"/></g><g transform="translate(1081.5,555.5)"><circle cx="4.2" cy="4.2" r="3.5" fill="none" stroke="#4A3A10" stroke-width="1.15"/><path d="M6.6 6.6L9.5 9.5" stroke="#4A3A10" stroke-width="2"/></g><g transform="translate(1081.5,574.5)"><circle cx="4.2" cy="4.2" r="3.5" fill="none" stroke="#4A3A10" stroke-width="1.15"/><path d="M6.6 6.6L9.5 9.5" stroke="#4A3A10" stroke-width="2"/></g><g transform="translate(1081.5,594.5)"><circle cx="4.2" cy="4.2" r="3.5" fill="none" stroke="#4A3A10" stroke-width="1.15"/><path d="M6.6 6.6L9.5 9.5" stroke="#4A3A10" stroke-width="2"/></g><g transform="translate(1051,636)"><rect x="0" y="0" width="2" height="2" fill="#4F3A10"/><rect x="4" y="0" width="2" height="2" fill="#4F3A10"/><rect x="8" y="0" width="2" height="2" fill="#4F3A10"/></g><g transform="translate(1067.5,629.5)"><path d="M0.6 0.6L7.9 7.1M7.9 0.6L0.6 7.1" stroke="#4A3A10" stroke-width="1.9"/></g><g transform="translate(1081.5,627.5)"><circle cx="4.2" cy="4.2" r="3.5" fill="none" stroke="#4A3A10" stroke-width="1.15"/><path d="M6.6 6.6L9.5 9.5" stroke="#4A3A10" stroke-width="2"/></g><g transform="translate(1051,656)"><rect x="0" y="0" width="2" height="2" fill="#4F3A10"/><rect x="4" y="0" width="2" height="2" fill="#4F3A10"/><rect x="8" y="0" width="2" height="2" fill="#4F3A10"/></g><g transform="translate(1067.5,649.5)"><path d="M0.6 0.6L7.9 7.1M7.9 0.6L0.6 7.1" stroke="#4A3A10" stroke-width="1.9"/></g><g transform="translate(1081.5,647.5)"><circle cx="4.2" cy="4.2" r="3.5" fill="none" stroke="#4A3A10" stroke-width="1.15"/><path d="M6.6 6.6L9.5 9.5" stroke="#4A3A10" stroke-width="2"/></g><g transform="translate(1051,676)"><rect x="0" y="0" width="2" height="2" fill="#4F3A10"/><rect x="4" y="0" width="2" height="2" fill="#4F3A10"/><rect x="8" y="0" width="2" height="2" fill="#4F3A10"/></g><g transform="translate(1067.5,669.5)"><path d="M0.6 0.6L7.9 7.1M7.9 0.6L0.6 7.1" stroke="#4A3A10" stroke-width="1.9"/></g><g transform="translate(1081.5,667.5)"><circle cx="4.2" cy="4.2" r="3.5" fill="none" stroke="#4A3A10" stroke-width="1.15"/><path d="M6.6 6.6L9.5 9.5" stroke="#4A3A10" stroke-width="2"/></g><g transform="translate(1051,696)"><rect x="0" y="0" width="2" height="2" fill="#4F3A10"/><rect x="4" y="0" width="2" height="2" fill="#4F3A10"/><rect x="8" y="0" width="2" height="2" fill="#4F3A10"/></g><g transform="translate(1067.5,689.5)"><path d="M0.6 0.6L7.9 7.1M7.9 0.6L0.6 7.1" stroke="#4A3A10" stroke-width="1.9"/></g><g transform="translate(1081.5,687.5)"><circle cx="4.2" cy="4.2" r="3.5" fill="none" stroke="#4A3A10" stroke-width="1.15"/><path d="M6.6 6.6L9.5 9.5" stroke="#4A3A10" stroke-width="2"/></g><g transform="translate(1051,716)"><rect x="0" y="0" width="2" height="2" fill="#4F3A10"/><rect x="4" y="0" width="2" height="2" fill="#4F3A10"/><rect x="8" y="0" width="2" height="2" fill="#4F3A10"/></g><g transform="translate(1067.5,709.5)"><path d="M0.6 0.6L7.9 7.1M7.9 0.6L0.6 7.1" stroke="#4A3A10" stroke-width="1.9"/></g><g transform="translate(1081.5,707.5)"><circle cx="4.2" cy="4.2" r="3.5" fill="none" stroke="#4A3A10" stroke-width="1.15"/><path d="M6.6 6.6L9.5 9.5" stroke="#4A3A10" stroke-width="2"/></g><g transform="translate(1051,736)"><rect x="0" y="0" width="2" height="2" fill="#4F3A10"/><rect x="4" y="0" width="2" height="2" fill="#4F3A10"/><rect x="8" y="0" width="2" height="2" fill="#4F3A10"/></g><g transform="translate(1067.5,729.5)"><path d="M0.6 0.6L7.9 7.1M7.9 0.6L0.6 7.1" stroke="#4A3A10" stroke-width="1.9"/></g><g transform="translate(1081.5,727.5)"><circle cx="4.2" cy="4.2" r="3.5" fill="none" stroke="#4A3A10" stroke-width="1.15"/><path d="M6.6 6.6L9.5 9.5" stroke="#4A3A10" stroke-width="2"/></g><g transform="translate(1051,756)"><rect x="0" y="0" width="2" height="2" fill="#4F3A10"/><rect x="4" y="0" width="2" height="2" fill="#4F3A10"/><rect x="8" y="0" width="2" height="2" fill="#4F3A10"/></g><g transform="translate(1067.5,749.5)"><path d="M0.6 0.6L7.9 7.1M7.9 0.6L0.6 7.1" stroke="#4A3A10" stroke-width="1.9"/></g><g transform="translate(1081.5,747.5)"><circle cx="4.2" cy="4.2" r="3.5" fill="none" stroke="#4A3A10" stroke-width="1.15"/><path d="M6.6 6.6L9.5 9.5" stroke="#4A3A10" stroke-width="2"/></g><path d="M1101 150.5L1104.5 144L1108 150.5Z" fill="#8E8E8E"/><path d="M845.5 733.5V749.5L849.5 745.5L852.5 752L855 751L852 744.5H857.5Z" fill="#FFFFFF" stroke="#15151F" stroke-width="1"/><defs><filter id="sh" x="-5%" y="-5%" width="110%" height="110%"><feDropShadow dx="-1" dy="1" stdDeviation="0.6" flood-color="#000" flood-opacity="0.35"/></filter></defs><g filter="url(#sh)"><path d="M146 151.5 L878 637" stroke="#FF0000" stroke-width="4.5"/><path d="M893 649.5 L878 629.5 L876 637 L870 643 Z" fill="#FF0000"/><rect x="904" y="620" width="194" height="66" rx="5" fill="none" stroke="#FF0000" stroke-width="5"/></g></svg>
</body></html>
